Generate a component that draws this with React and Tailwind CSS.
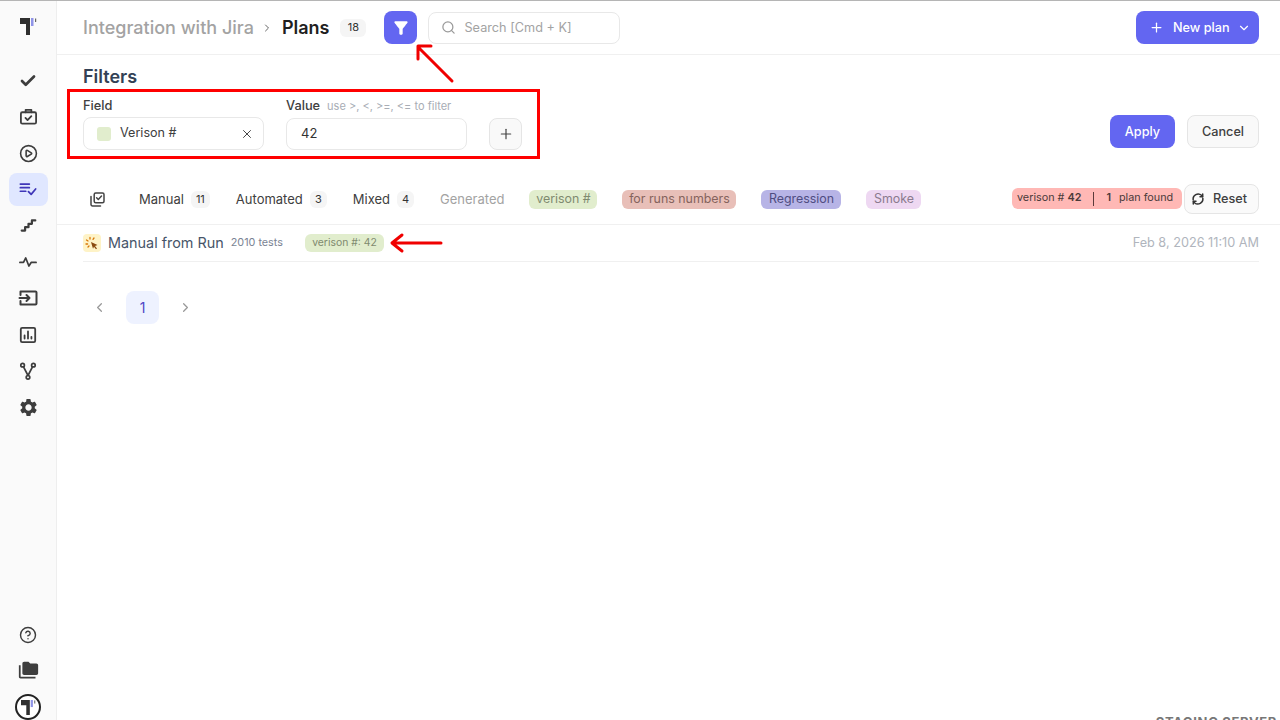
import React from "react";
import { Check, CirclePlay, CircleHelp, Search, Plus, ChevronDown, ChevronLeft, ChevronRight, X, ChevronRight as Crumb } from "lucide-react";
import { MdSettings, MdFolderCopy, MdFilterAlt } from "react-icons/md";

const Logo = ({ size = 17 }) => (
  <svg width={size} height={size} viewBox="0 0 17 17">
    <path d="M0 0h10v17H6V6H0z" fill="#2f2f2f" />
    <rect x="11" y="0" width="2.5" height="8" fill="#8f94e8" />
    <rect x="15" y="0.5" width="1.2" height="3.5" fill="#666" />
  </svg>
);
const Stroke = ({ children, size = 20, color = "#3d3d3d", w = 2 }) => (
  <svg width={size} height={size} viewBox="0 0 20 20" fill="none" stroke={color} strokeWidth={w} strokeLinecap="round" strokeLinejoin="round">{children}</svg>
);
const NavItem = ({ children, active, className = "" }) => (
  <div className={`w-[39px] h-[33px] flex items-center justify-center rounded-lg ${active ? "bg-[#e0e7ff]" : ""} ${className}`}>{children}</div>
);
const Count = ({ children, className = "" }) => (
  <span className={`inline-flex items-center justify-center h-[17px] rounded-md bg-[#f5f5f5] text-[11px] font-normal text-[#333] ${className}`}>{children}</span>
);
const Tab = ({ label, count, w }) => (
  <div className="flex items-center gap-[7px] text-[13px] font-normal text-[#404040]">
    <span>{label}</span>
    {count && <Count className={w}>{count}</Count>}
  </div>
);

export default function App() {
  return (
    <div className="relative w-[1280px] h-[720px] overflow-hidden bg-white flex border-t border-[#b5b5b5] text-[#404040] font-['Inter',sans-serif]">
      <aside className="w-[57px] shrink-0 h-full bg-[#fafafa] border-r border-[#eeeeee] flex flex-col items-center">
        <div className="h-[50px] flex items-center justify-center"><Logo size={17} /></div>
        <div className="flex flex-col items-center mt-[13px] gap-[3.33px] w-full">
          <NavItem><Check size={18} strokeWidth={3.6} color="#3d3d3d" /></NavItem>
          <NavItem>
            <Stroke size={19} w={1.9}><rect x="2" y="5.5" width="16" height="12" rx="1.5" /><path d="M7 5.5V3h6v2.5M6.8 11.5l2.2 2.2 4-4" /></Stroke>
          </NavItem>
          <NavItem><CirclePlay size={19} strokeWidth={2} color="#3d3d3d" /></NavItem>
          <NavItem active>
            <Stroke size={18} color="#3f36b8" w={1.9}><path d="M1.5 4.5h10M1.5 8.5h10M1.5 12.5h6M10.5 13l3 3 5-6" /></Stroke>
          </NavItem>
          <NavItem>
            <Stroke size={17} w={2.6}><path d="M2 16h4v-4h4V8h4V4h4" /></Stroke>
          </NavItem>
          <NavItem>
            <Stroke size={18} w={1.9}><path d="M1 10.5h4l2.5-5 3.5 9 2.5-4h5.5" /></Stroke>
          </NavItem>
          <NavItem>
            <Stroke size={20} w={2}><path d="M2.5 7V3.5h15a1 1 0 0 1 1 1v11a1 1 0 0 1-1 1h-15V13M1.5 10h10M8.5 7l3 3-3 3" /></Stroke>
          </NavItem>
          <NavItem>
            <Stroke size={18} w={2}><rect x="2" y="2" width="16" height="16" rx="1.5" /><path d="M6.2 14v-3.5M10 14V6M13.8 14v-2" /></Stroke>
          </NavItem>
          <NavItem>
            <Stroke size={18} w={1.9}><circle cx="4" cy="3.5" r="2" /><circle cx="16" cy="3.5" r="2" /><circle cx="10" cy="17" r="2" /><path d="M5 5.5l5 9.5M15 5.5l-5 9.5" /></Stroke>
          </NavItem>
          <NavItem><MdSettings size={21} color="#3d3d3d" /></NavItem>
        </div>
        <div className="mt-auto flex flex-col items-center">
          <CircleHelp size={18} strokeWidth={1.9} color="#3d3d3d" className="mb-[16px]" />
          <MdFolderCopy size={21} color="#3d3d3d" className="mb-[13px]" />
          <div className="w-[26px] h-[26px] rounded-full border-2 border-[#222] flex items-center justify-center bg-white"><Logo size={15} /></div>
        </div>
      </aside>

      <main className="flex-1 min-w-0 flex flex-col">
        <header className="h-[54px] shrink-0 border-b border-[#f0f0f0] flex items-center pl-[26px] pr-[21px]">
          <span className="text-lg font-medium text-[#a3a3a3]">Integration with Jira</span>
          <Crumb size={12} strokeWidth={2} color="#666" className="ml-[7px]" />
          <span className="ml-[9px] text-lg font-semibold text-[#1f1f1f]">Plans</span>
          <Count className="ml-[11px] w-[26px] h-[18px]">18</Count>
          <button className="ml-[18px] w-[33px] h-[33px] rounded-lg bg-[#6366f1] flex items-center justify-center"><MdFilterAlt size={20} color="#fff" /></button>
          <div className="ml-[11px] w-[192px] h-[32px] rounded-lg border border-[#e8e8e8] flex items-center pl-[12px] gap-[8px]">
            <Search size={15} color="#9a9a9a" strokeWidth={2} />
            <span className="text-[12.7px] text-[#a3a3a3]">Search [Cmd + K]</span>
          </div>
          <button className="ml-auto w-[123px] h-[33px] rounded-lg bg-[#6366f1] flex items-center pl-[13px] text-white text-[12.7px] font-medium">
            <Plus size={15} strokeWidth={2} />
            <span className="ml-[9px]">New plan</span>
            <ChevronDown size={14} strokeWidth={2} className="ml-[7px]" />
          </button>
        </header>

        <section className="pl-[26px] pr-[21px]">
          <h2 className="mt-[10px] text-lg leading-[24px] font-semibold text-[#334155]">Filters</h2>
          <div className="flex items-end mt-[8px]">
            <div className="w-[181px]">
              <div className="text-[12.8px] leading-[18px] font-medium text-[#404040] mb-[2px]">Field</div>
              <div className="h-[33px] rounded-lg border border-[#e8e8e8] flex items-center pl-[13px] pr-[9px]">
                <span className="w-[14px] h-[14px] rounded-[3px] bg-[#e1edcd]" />
                <span className="ml-[9px] text-[12.6px] text-[#404040]">Verison #</span>
                <X size={14} strokeWidth={1.7} color="#444" className="ml-auto" />
              </div>
            </div>
            <div className="w-[181px] ml-[22px]">
              <div className="flex items-baseline mb-[3px] leading-[18px]">
                <span className="text-[12.8px] font-medium text-[#404040]">Value</span>
                <span className="ml-[7px] text-[11px] text-[#a8adb5]">use &gt;, &lt;, &gt;=, &lt;= to filter</span>
              </div>
              <div className="h-[32px] rounded-lg border border-[#e8e8e8] flex items-center pl-[14px] text-[13px] text-[#333]">42</div>
            </div>
            <button className="ml-[22px] w-[33px] h-[32px] rounded-lg border border-[#e5e5e5] bg-[#f9f9f9] flex items-center justify-center"><Plus size={16} strokeWidth={1.8} color="#444" /></button>
            <button className="ml-auto mb-[2px] w-[65px] h-[33px] rounded-lg bg-[#6366f1] text-white text-[12.7px] font-medium">Apply</button>
            <button className="ml-[12px] mb-[2px] w-[72px] h-[33px] rounded-lg border border-[#e5e5e5] bg-[#f9f9f9] text-[12.7px] font-medium text-[#404040]">Cancel</button>
          </div>
        </section>

        <nav className="mt-[34px] h-[41px] shrink-0 border-b border-[#f0f0f0] pb-[10px] pl-[33px] pr-[21px] flex items-center">
          <svg width="15" height="15" viewBox="0 0 15 15" fill="none" stroke="#444" strokeWidth="1.5" strokeLinecap="round" strokeLinejoin="round">
            <rect x="4.2" y="1" width="9.8" height="9.8" rx="1.5" />
            <path d="M6.6 5.8l1.7 1.7 3.2-3.4" />
            <path d="M1 4.5v8a1.5 1.5 0 0 0 1.5 1.5h8" />
          </svg>
          <div className="ml-[34px] mt-[1px] flex items-center gap-[26px]">
            <Tab label="Manual" count="11" w="w-[19px]" />
            <Tab label="Automated" count="3" w="w-[17px]" />
            <Tab label="Mixed" count="4" w="w-[17px]" />
            <span className="text-[13px] font-normal text-[#a3a3a3]">Generated</span>
          </div>
          <div className="ml-[25px] mt-[1px] flex items-center gap-[25px] text-[12.4px] font-normal">
            <span className="h-[19px] w-[68px] rounded-md bg-[#e1edcd] text-[#7f8a6f] flex items-center justify-center">verison #</span>
            <span className="h-[19px] w-[114px] rounded-md bg-[#e8bfb8] text-[#85635d] flex items-center justify-center">for runs numbers</span>
            <span className="h-[19px] w-[80px] rounded-md bg-[#b7b4e6] text-[#4f4d82] flex items-center justify-center">Regression</span>
            <span className="h-[19px] w-[55px] rounded-md bg-[#eed8f2] text-[#8a7a8e] flex items-center justify-center">Smoke</span>
          </div>
          <div className="ml-auto flex items-center gap-[2px]">
            <div className="h-[21px] w-[170px] mb-[1px] pl-[5px] rounded-md bg-[#ffb8b5] flex items-center text-[10.8px] font-normal text-[#4a3a3a]">
              <span>verison # <b className="font-semibold">42</b></span>
              <span className="mx-[12px] h-[14px] w-px bg-[#5a3a3a]" />
              <b className="font-semibold">1</b>
              <span className="ml-[8px]">plan found</span>
            </div>
            <button className="h-[30px] w-[75px] rounded-lg border border-[#e5e5e5] bg-[#fafafa] flex items-center pl-[6px] gap-[8px] text-[12.7px] font-medium text-[#404040]">
              <svg width="14" height="14" viewBox="0 0 14 14" fill="none" stroke="#333" strokeWidth="1.5" strokeLinecap="round" strokeLinejoin="round">
                <path d="M2.2 7.8A5 5 0 0 1 10.5 3.3L11.5 4.5M11.8 6.2A5 5 0 0 1 3.5 10.7L2.5 9.5" />
                <path d="M11.7 2v2.7H9M2.3 12V9.3H5" />
              </svg>
              Reset
            </button>
          </div>
        </nav>

        <div className="ml-[26px] mr-[21px] h-[37px] shrink-0 border-b border-[#f0f0f0] flex items-center">
          <span className="w-[18px] h-[18px] rounded-[4px] bg-[#fef3c7] flex items-center justify-center">
            <svg width="14" height="14" viewBox="0 0 14 14" fill="none" strokeLinecap="round">
              <path d="M6 6l6.5 3-2.5 1 2 2.5-1 .8-2-2.5-1 2z" fill="#8a4a10" />
              <path d="M5 1.5v1.5M9 2L8 3.3M1.5 4l1.5 1M1 8h1.6M3 11l1-1" stroke="#d97706" strokeWidth="1.3" />
            </svg>
          </span>
          <span className="ml-[7px] text-[14.4px] text-[#475569]">Manual from Run</span>
          <span className="ml-[7px] text-[10.8px] text-[#7b8494]">2010 tests</span>
          <span className="ml-[22px] h-[18px] w-[79px] rounded-md bg-[#e1edcd] text-[#7f8a6f] text-[10.4px] flex items-center justify-center">verison #: 42</span>
          <span className="ml-auto text-[12.7px] text-[#b0b5bd]">Feb 8, 2026 11:10 AM</span>
        </div>

        <div className="mt-[29px] pl-[26px] flex items-center">
          <div className="w-[33px] flex justify-center"><ChevronLeft size={15} strokeWidth={2} color="#999" /></div>
          <div className="ml-[10px] w-[33px] h-[33px] rounded-lg bg-[#eef2ff] flex items-center justify-center text-sm font-normal text-[#4f46c5]">1</div>
          <div className="ml-[10px] w-[33px] flex justify-center"><ChevronRight size={15} strokeWidth={2} color="#999" /></div>
        </div>
      </main>

      {/* annotation overlays */}
      <div className="absolute left-[67px] top-[88px] w-[473px] h-[70px] border-[3px] border-[#ff0000]" />
      <svg className="absolute left-0 top-0 pointer-events-none" width="1280" height="720" fill="none" stroke="#f00000" strokeWidth="3" strokeLinecap="round" strokeLinejoin="round">
        <path d="M452 80L418 46M418 58V45H431" />
        <path d="M441 242H393M402 234L392 242L402 250" />
      </svg>
      <div className="absolute right-[3px] top-[715px] text-[13px] font-bold tracking-wider text-[#777] leading-[13px]">STAGING SERVER</div>
    </div>
  );
}
